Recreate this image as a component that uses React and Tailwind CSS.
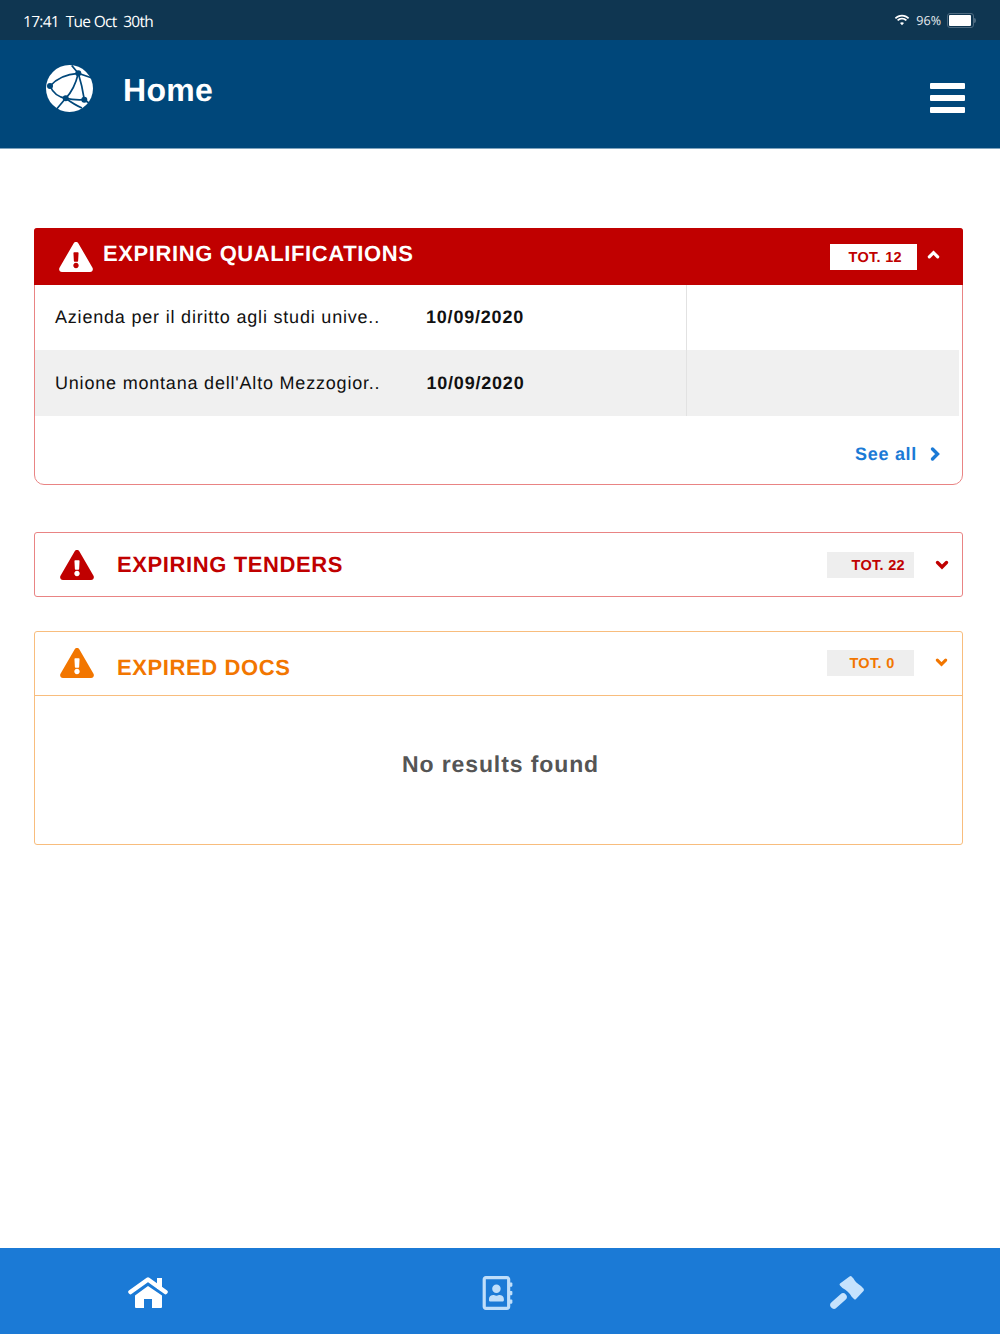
import { FaRegAddressBook, FaExclamationTriangle } from "react-icons/fa";

function Globe() {
  return (
    <svg viewBox="0 0 48 48" className="w-12 h-12">
      <circle cx="23.500" cy="23.500" r="23.500" fill="#fff" />
      <g stroke="#00477a" strokeWidth="1.700" fill="none">
        <path d="M25.700 0.500 L32.300 8.300 L46 13" />
        <path d="M4 21 C11 13 21 9 32.300 8.300" />
        <path d="M32.300 8.300 C30 18 26 27 19.700 33.300" />
        <path d="M32.300 8.300 C35 17 37 26 38.300 34.700" />
        <path d="M4 21 C7 28 12 32 19.700 33.300" />
        <path d="M19.700 33.300 C26 35 32 35 38.300 34.700" />
        <path d="M19.700 33.300 L10.700 44" />
        <path d="M19.700 33.300 C26 38 31 41 36 43" />
        <path d="M38.300 34.700 L43 38" />
      </g>
      <circle cx="4" cy="21" r="3" fill="#00477a" />
      <circle cx="32.300" cy="8.300" r="3" fill="#00477a" />
      <circle cx="19.700" cy="33.300" r="3" fill="#00477a" />
      <circle cx="38.300" cy="34.700" r="3" fill="#00477a" />
    </svg>
  );
}

function Chevron({ d, className }) {
  return (
    <svg viewBox="0 0 14 14" className={className} fill="none" stroke="currentColor" strokeWidth="3.400" strokeLinecap="round" strokeLinejoin="miter">
      <path d={d} />
    </svg>
  );
}

function HomeIcon() {
  return (
    <svg viewBox="0 0 40 32" className="w-10 h-8 text-white" fill="currentColor">
      <rect x="29" y="1" width="5" height="11" />
      <path d="M2.500 15 L20 2.500 L37.500 15" fill="none" stroke="currentColor" strokeWidth="4.500" strokeLinecap="round" strokeLinejoin="round" />
      <path d="M7 18.500 L20 9 L34 18.500 V30 Q34 31 33 31 H24 V22 H16 V31 H8 Q7 31 7 30 Z" />
    </svg>
  );
}

function GavelIcon() {
  return (
    <svg viewBox="0 0 36 36" className="w-9 h-9 text-[#c5e2fd]" fill="currentColor">
      <path d="M20.500 1.500 Q22 .5 23 2 L24.500 3.500 Q26 7 32 11 L34.500 13.500 Q35.500 15 34.500 16 L27 24 Q26 25 25 24 L22.500 21.500 Q19.500 16 13.500 13 L11 10.500 Q10 9.500 11 8.500 Z" />
      <path d="M5 30 L14 22" fill="none" stroke="currentColor" strokeWidth="7.500" strokeLinecap="round" />
    </svg>
  );
}

function Row({ name, date, grey, first }) {
  return (
    <div className={`flex mr-[3px] ${first ? "h-[65px]" : "h-[66px]"} ${grey ? "bg-[#f0f0f0]" : ""}`}>
      <div className="w-[652px] flex items-center pl-5 border-r border-[#e2e2e2] text-[18px] tracking-[0.8px] text-[#111]">
        <span>{name}</span>
        <span className="ml-[46px] font-bold">{date}</span>
      </div>
    </div>
  );
}

export default function App() {
  return (
    <div className="h-[1334px] w-[1000px] flex flex-col bg-white font-['Liberation_Sans',Arial,sans-serif] [text-rendering:geometricPrecision] overflow-hidden">
      {/* status bar */}
      <div className="h-10 bg-[#0f3651] flex items-center justify-between pl-[23px] pr-6 text-white font-['Open_Sans',sans-serif]">
        <span className="pt-[3px] text-[15.500px] font-medium tracking-[-0.7px] whitespace-pre">17:41  Tue Oct  30th</span>
        <div className="flex items-center">
          <svg viewBox="0 0 16 12" className="w-4 h-3" fill="#fff">
            <path d="M8 2.600c2.300 0 4.400.9 6 2.400l1.200-1.300C13.300 1.900 10.800.8 8 .8S2.700 1.900.8 3.700L2 5c1.600-1.500 3.700-2.400 6-2.400z" />
            <path d="M8 5.600c1.500 0 2.800.6 3.800 1.500L13 5.800C11.700 4.600 9.900 3.800 8 3.800s-3.700.8-5 2L4.200 7.100c1-.9 2.300-1.500 3.800-1.500z" />
            <path d="M8 8.300c-.8 0-1.500.3-2 .8L8 11.200l2-2.100c-.5-.5-1.200-.8-2-.8z" />
          </svg>
          <span className="ml-[6px] mr-[5px] pt-[2px] text-[12.500px] text-[#e8edf0]">96%</span>
          <div className="flex items-center">
            <div className="w-[27px] h-[15px] border border-[#4d6a80] rounded-[3px] p-[1px] ml-[1px]">
              <div className="w-[22px] h-full bg-white rounded-[1px]" />
            </div>
            <div className="w-[2px] h-[5px] bg-[#4d6a80] rounded-r-sm" />
          </div>
        </div>
      </div>

      {/* header */}
      <div className="h-[109px] bg-[#00477a] border-b border-[#7fa3bd] flex justify-between pl-[46px] pr-[35px] text-white">
        <div className="flex items-start pt-[25px]">
          <Globe />
          <h1 className="ml-[29px] mt-[6px] text-[32px] font-bold tracking-[0.3px] leading-[38px]">Home</h1>
        </div>
        <div className="flex flex-col gap-[6px] pt-[43px]">
          <div className="w-[35px] h-[6px] bg-white rounded-[1px]" />
          <div className="w-[35px] h-[6px] bg-white rounded-[1px]" />
          <div className="w-[35px] h-[6px] bg-white rounded-[1px]" />
        </div>
      </div>

      {/* cards */}
      <div className="flex-1 pl-[34px] pr-[37px] pt-[79px]">
        <div className="h-[257px] border border-[#e98484] rounded-t-[3px] rounded-b-[10px]">
          <div className="h-[57px] -mt-[1px] -mx-[1px] bg-[#c00000] rounded-t-[3px] flex items-center pl-[25px] text-white">
            <FaExclamationTriangle className="w-[34px] h-[30px]" />
            <span className="ml-[10px] -mt-[7px] text-[22px] font-bold tracking-[0.6px]">EXPIRING QUALIFICATIONS</span>
            <div className="ml-auto w-[87px] h-[26px] bg-white flex items-center justify-end pr-[15px] pt-[5px] text-[14.500px] font-bold text-[#c00000] tracking-[0.3px]">TOT. 12</div>
            <Chevron d="M2.500 9.500 L7 5 L11.500 9.500" className="ml-[10px] mr-[23px] w-[13px] h-[13px] -mt-[5px]" />
          </div>
          <Row first name="Azienda per il diritto agli studi unive.." date="10/09/2020" />
          <Row grey name="Unione montana dell'Alto Mezzogior.." date="10/09/2020" />
          <div className="flex items-center justify-end pr-[20px] pt-[25px] text-[#1b7ad6]">
            <span className="text-[18px] font-bold tracking-[0.7px]">See all</span>
            <Chevron d="M4.500 2 L9.500 7 L4.500 12" className="ml-[11px] w-[14px] h-[16px] -mt-[1px]" />
          </div>
        </div>

        <div className="mt-[47px] h-[65px] border border-[#e98484] rounded-[3px] flex items-center pl-[25px] text-[#c00000]">
          <FaExclamationTriangle className="w-[34px] h-[30px]" />
          <span className="ml-[23px] text-[22px] font-bold tracking-[0.6px]">EXPIRING TENDERS</span>
          <div className="ml-auto w-[87px] h-[26px] bg-[#eeeeee] flex items-center justify-end pr-[9px] pt-[4px] text-[14.500px] font-bold tracking-[0.3px]">TOT. 22</div>
          <Chevron d="M2.500 4.500 L7 9 L11.500 4.500" className="ml-[21px] mr-[13px] w-[14px] h-[14px]" />
        </div>

        <div className="mt-[34px] h-[214px] border border-[#f8bd7d] rounded-[3px] text-[#f27600]">
          <div className="h-[64px] border-b border-[#f8bd7d] flex items-center pl-[25px]">
            <FaExclamationTriangle className="w-[34px] h-[30px] -mt-[2px]" />
            <span className="ml-[23px] mt-[8px] text-[22px] font-bold tracking-[0.6px]">EXPIRED DOCS</span>
            <div className="ml-auto w-[87px] h-[26px] bg-[#eeeeee] flex items-center justify-center pl-[3px] pt-[4px] text-[14.500px] font-bold tracking-[0.3px] -mt-[2px]">TOT. 0</div>
            <Chevron d="M2.500 4.500 L7 9 L11.500 4.500" className="ml-[21px] mr-[14px] w-[13px] h-[13px] -mt-[2px]" />
          </div>
          <div className="pt-[51px] pl-[4px] text-center text-[23px] font-bold tracking-[0.9px] text-[#555]">No results found</div>
        </div>
      </div>

      {/* tab bar */}
      <div className="h-[86px] bg-[#1b7ad6] flex items-center justify-between pl-[128px] pr-[135px] pt-[4px]">
        <HomeIcon />
        <FaRegAddressBook className="w-[31px] h-[34px] mr-[2px] text-[#bfdefa]" />
        <GavelIcon />
      </div>
    </div>
  );
}
